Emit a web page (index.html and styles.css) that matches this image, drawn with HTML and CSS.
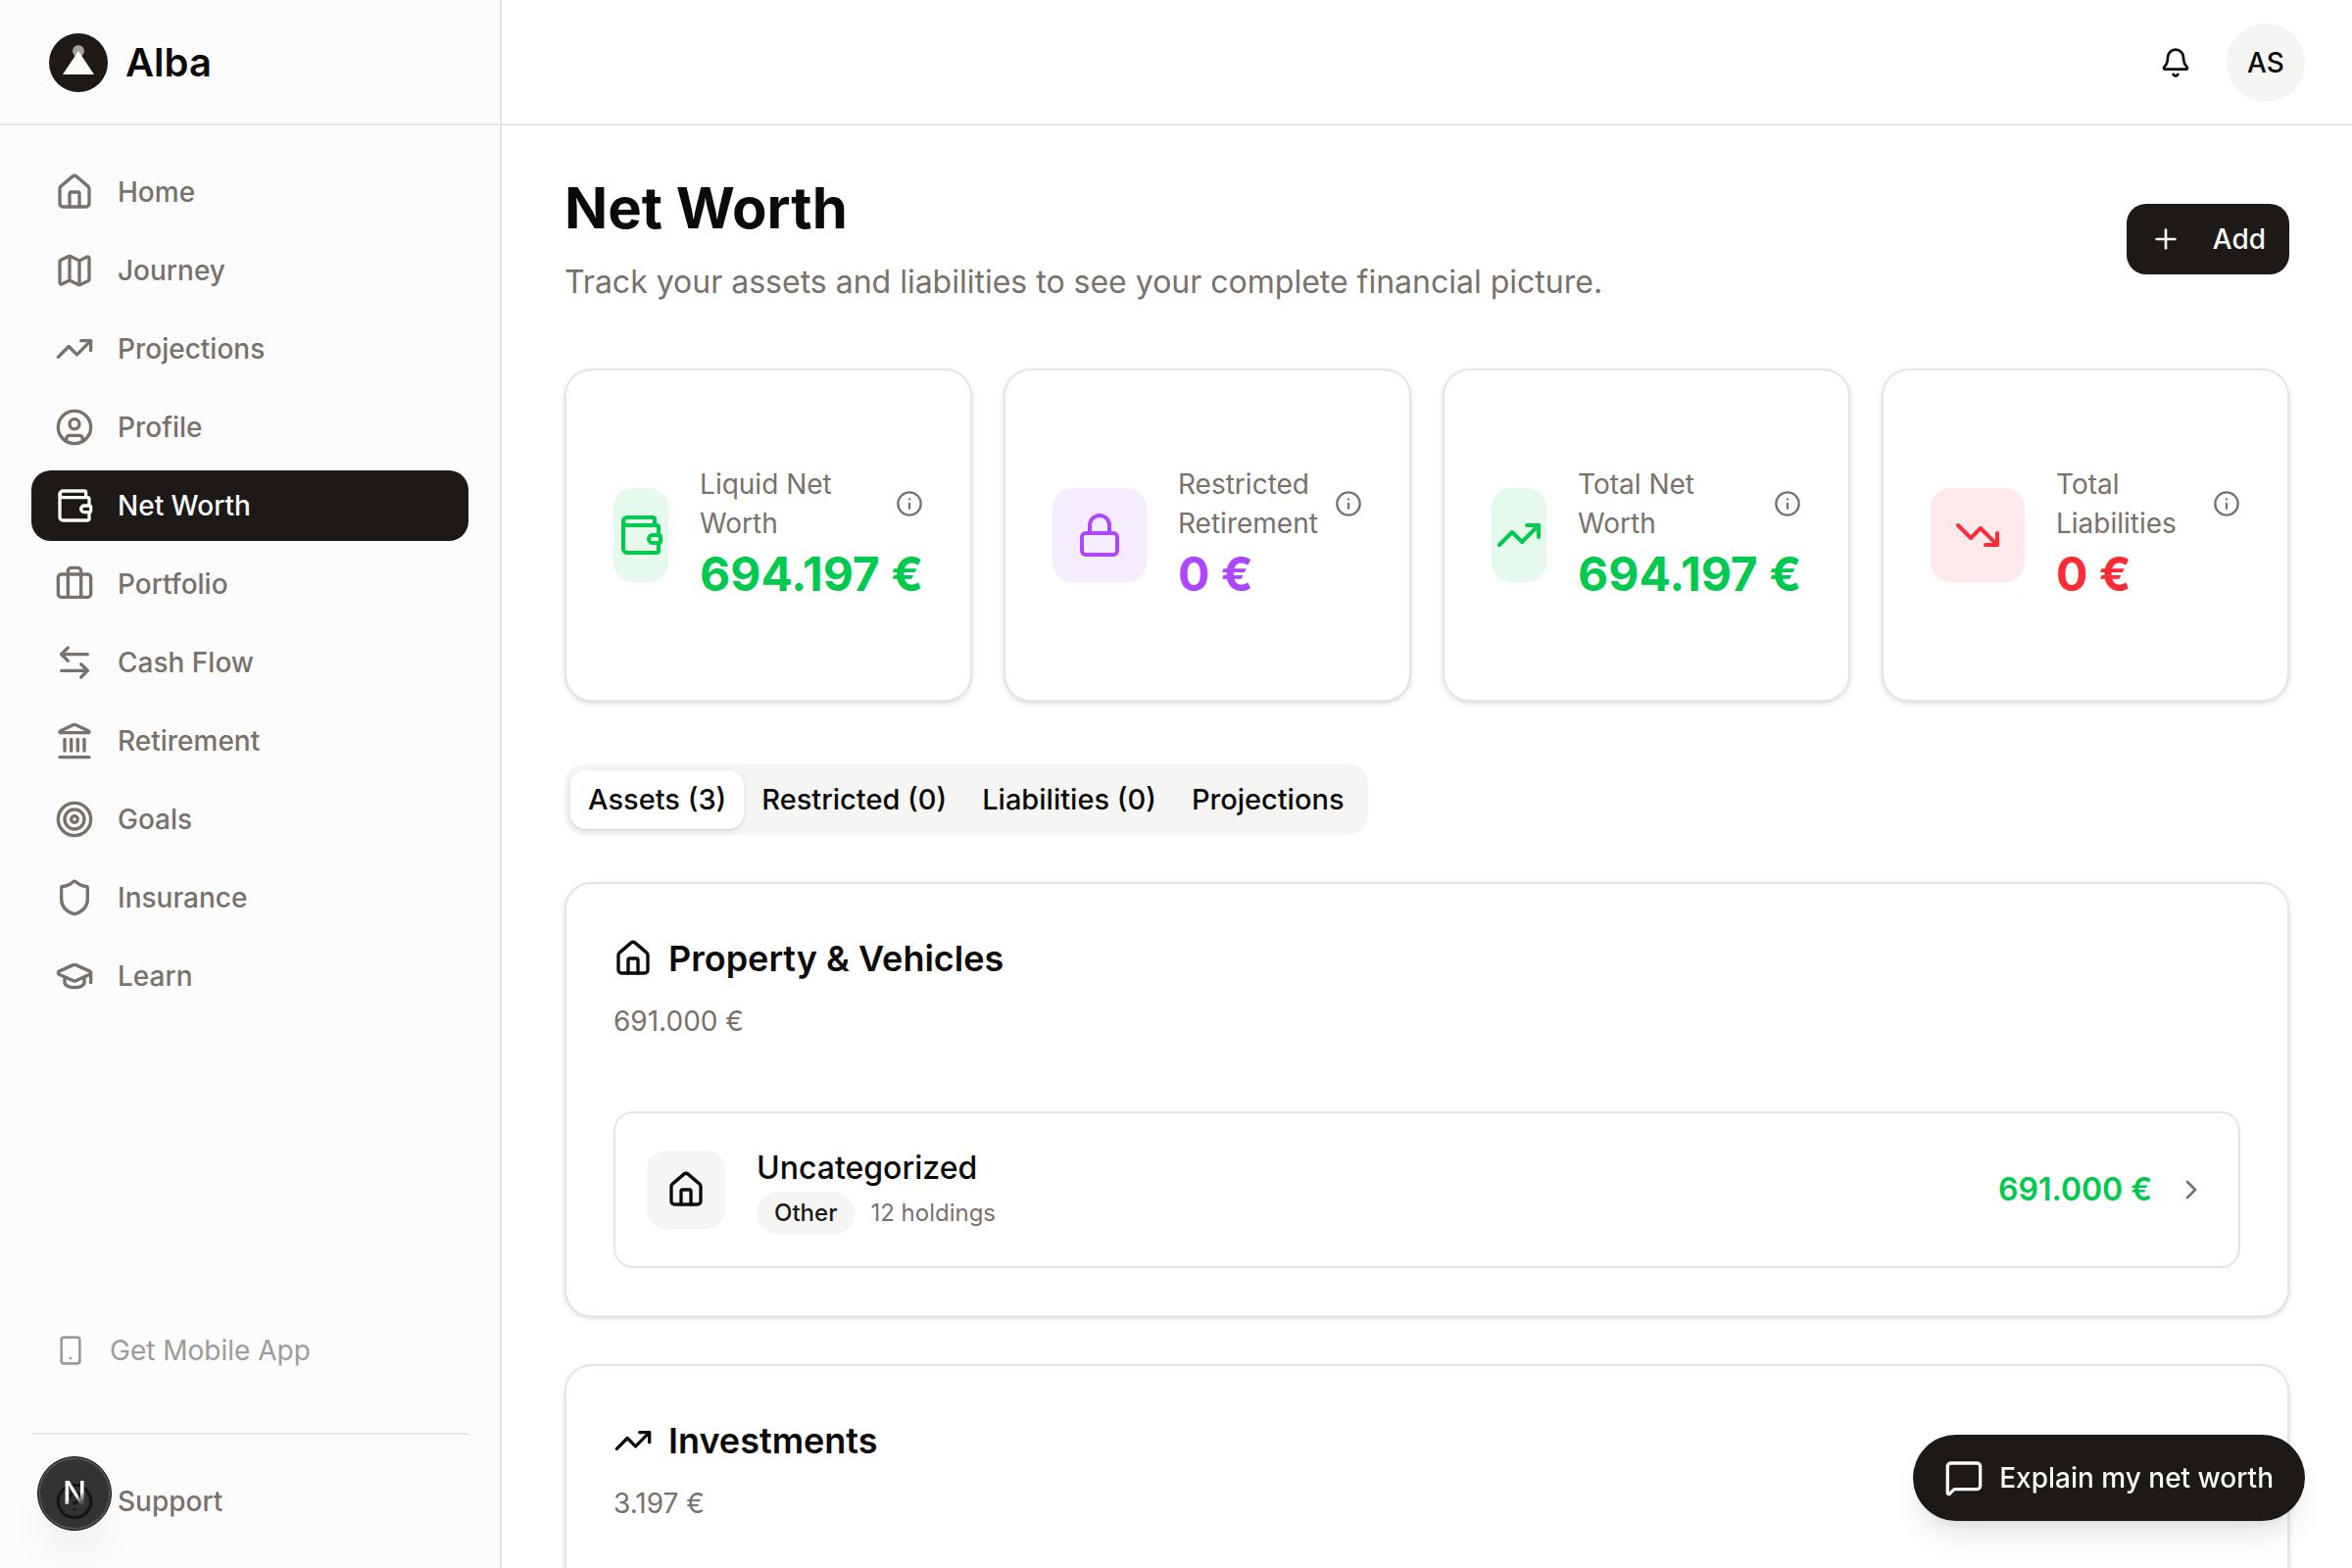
FILE: index.html
```html
<!DOCTYPE html>
<html lang="en">
<head>
<meta charset="UTF-8">
<meta name="viewport" content="width=device-width, initial-scale=1.0">
<title>Alba - Net Worth</title>
<link rel="stylesheet" href="styles.css">
</head>

<body>
  <!-- icons -->
  <svg class="sprite" aria-hidden="true">
    <symbol id="house" viewBox="0 0 24 24"><path d="M15 21v-8a1 1 0 0 0-1-1h-4a1 1 0 0 0-1 1v8"/><path d="M3 10a2 2 0 0 1 .709-1.528l7-5.999a2 2 0 0 1 2.582 0l7 5.999A2 2 0 0 1 21 10v9a2 2 0 0 1-2 2H5a2 2 0 0 1-2-2z"/></symbol>
    <symbol id="map" viewBox="0 0 24 24"><path d="M14.106 5.553a2 2 0 0 0 1.788 0l3.659-1.83A1 1 0 0 1 21 4.619v12.764a1 1 0 0 1-.553.894l-4.553 2.277a2 2 0 0 1-1.788 0l-4.212-2.106a2 2 0 0 0-1.788 0l-3.659 1.83A1 1 0 0 1 3 19.381V6.618a1 1 0 0 1 .553-.894l4.553-2.277a2 2 0 0 1 1.788 0z"/><path d="M15 5.764v15"/><path d="M9 3.236v15"/></symbol>
    <symbol id="trending-up" viewBox="0 0 24 24"><path d="M16 7h6v6"/><path d="m22 7-8.5 8.5-5-5L2 17"/></symbol>
    <symbol id="trending-down" viewBox="0 0 24 24"><path d="M16 17h6v-6"/><path d="m22 17-8.5-8.5-5 5L2 7"/></symbol>
    <symbol id="user" viewBox="0 0 24 24"><circle cx="12" cy="12" r="10"/><circle cx="12" cy="10" r="3"/><path d="M7 20.662V19a2 2 0 0 1 2-2h6a2 2 0 0 1 2 2v1.662"/></symbol>
    <symbol id="wallet" viewBox="0 0 24 24"><path d="M19 7V4a1 1 0 0 0-1-1H5a2 2 0 0 0 0 4h15a1 1 0 0 1 1 1v4h-3a2 2 0 0 0 0 4h3a1 1 0 0 0 1-1v-2a1 1 0 0 0-1-1"/><path d="M3 5v14a2 2 0 0 0 2 2h15a1 1 0 0 0 1-1v-4"/></symbol>
    <symbol id="briefcase" viewBox="0 0 24 24"><path d="M16 20V4a2 2 0 0 0-2-2h-4a2 2 0 0 0-2 2v16"/><rect width="20" height="14" x="2" y="6" rx="2"/></symbol>
    <symbol id="arrows" viewBox="0 0 24 24"><path d="M8 3 4 7l4 4"/><path d="M4 7h16"/><path d="m16 21 4-4-4-4"/><path d="M20 17H4"/></symbol>
    <symbol id="landmark" viewBox="0 0 24 24"><path d="M10 18v-7"/><path d="M11.12 2.198a2 2 0 0 1 1.76.006l7.866 3.847c.476.233.31.949-.22.949H3.474c-.53 0-.695-.716-.22-.949z"/><path d="M14 18v-7"/><path d="M18 18v-7"/><path d="M3 22h18"/><path d="M6 18v-7"/></symbol>
    <symbol id="target" viewBox="0 0 24 24"><circle cx="12" cy="12" r="10"/><circle cx="12" cy="12" r="6"/><circle cx="12" cy="12" r="2"/></symbol>
    <symbol id="shield" viewBox="0 0 24 24"><path d="M20 13c0 5-3.5 7.5-7.66 8.95a1 1 0 0 1-.67-.01C7.5 20.5 4 18 4 13V6a1 1 0 0 1 1-1c2 0 4.5-1.2 6.24-2.72a1.17 1.17 0 0 1 1.52 0C14.51 3.81 17 5 19 5a1 1 0 0 1 1 1z"/></symbol>
    <symbol id="cap" viewBox="0 0 24 24"><path d="M21.42 10.922a1 1 0 0 0-.019-1.838L12.83 5.18a2 2 0 0 0-1.66 0L2.6 9.08a1 1 0 0 0 0 1.832l8.57 3.908a2 2 0 0 0 1.66 0z"/><path d="M22 10v6"/><path d="M6 12.5V16a6 3 0 0 0 12 0v-3.5"/></symbol>
    <symbol id="phone" viewBox="0 0 24 24"><rect width="14" height="20" x="5" y="2" rx="2"/><path d="M12 18h.01"/></symbol>
    <symbol id="help" viewBox="0 0 24 24"><circle cx="12" cy="12" r="10"/><path d="M9.09 9a3 3 0 0 1 5.83 1c0 2-3 3-3 3"/><path d="M12 17h.01"/></symbol>
    <symbol id="bell" viewBox="0 0 24 24"><path d="M10.268 21a2 2 0 0 0 3.464 0"/><path d="M3.262 15.326A1 1 0 0 0 4 17h16a1 1 0 0 0 .74-1.673C19.41 13.956 18 12.499 18 8A6 6 0 0 0 6 8c0 4.499-1.411 5.956-2.738 7.326"/></symbol>
    <symbol id="plus" viewBox="0 0 24 24"><path d="M5 12h14"/><path d="M12 5v14"/></symbol>
    <symbol id="lock" viewBox="0 0 24 24"><rect width="18" height="11" x="3" y="11" rx="2"/><path d="M7 11V7a5 5 0 0 1 10 0v4"/></symbol>
    <symbol id="info" viewBox="0 0 24 24"><circle cx="12" cy="12" r="10"/><path d="M12 16v-4"/><path d="M12 8h.01"/></symbol>
    <symbol id="chevron" viewBox="0 0 24 24"><path d="m9 18 6-6-6-6"/></symbol>
    <symbol id="message" viewBox="0 0 24 24"><path d="M22 17a2 2 0 0 1-2 2H6.828a2 2 0 0 0-1.414.586l-2.202 2.202A.71.71 0 0 1 2 21.286V5a2 2 0 0 1 2-2h16a2 2 0 0 1 2 2z"/></symbol>
  </svg>

  <div class="app">
    <aside class="sidebar">
      <a class="brand" href="#">
        <svg class="brand-logo" viewBox="0 0 60 60" aria-hidden="true">
          <circle cx="30" cy="30" r="30" fill="#1c1917"/>
          <circle cx="30" cy="18" r="6" fill="#fafaf9" opacity="0.6"/>
          <path d="M30 18 46 42H14z" fill="#fafaf9"/>
        </svg>
        Alba
      </a>

      <nav class="nav">
        <a class="nav-item" href="#"><svg class="icon"><use href="#house"/></svg>Home</a>
        <a class="nav-item" href="#"><svg class="icon"><use href="#map"/></svg>Journey</a>
        <a class="nav-item" href="#"><svg class="icon"><use href="#trending-up"/></svg>Projections</a>
        <a class="nav-item" href="#"><svg class="icon"><use href="#user"/></svg>Profile</a>
        <a class="nav-item active" href="#"><svg class="icon"><use href="#wallet"/></svg>Net Worth</a>
        <a class="nav-item" href="#"><svg class="icon"><use href="#briefcase"/></svg>Portfolio</a>
        <a class="nav-item" href="#"><svg class="icon"><use href="#arrows"/></svg>Cash Flow</a>
        <a class="nav-item" href="#"><svg class="icon"><use href="#landmark"/></svg>Retirement</a>
        <a class="nav-item" href="#"><svg class="icon"><use href="#target"/></svg>Goals</a>
        <a class="nav-item" href="#"><svg class="icon"><use href="#shield"/></svg>Insurance</a>
        <a class="nav-item" href="#"><svg class="icon"><use href="#cap"/></svg>Learn</a>
      </nav>

      <a class="mobile-link" href="#"><svg class="icon icon-sm"><use href="#phone"/></svg>Get Mobile App</a>
      <div class="sidebar-footer">
        <a class="nav-item" href="#"><svg class="icon"><use href="#help"/></svg>Support</a>
      </div>
    </aside>

    <div class="page">
      <header class="topbar">
        <button class="bell" type="button" aria-label="Notifications"><svg class="icon icon-sm"><use href="#bell"/></svg></button>
        <button class="avatar" type="button">AS</button>
      </header>

      <main class="content">
        <div class="page-head">
          <div>
            <h1>Net Worth</h1>
            <p class="lead">Track your assets and liabilities to see your complete financial picture.</p>
          </div>
          <button class="add" type="button"><svg class="icon icon-sm"><use href="#plus"/></svg>Add</button>
        </div>

        <section class="stats">
          <div class="stat green">
            <div class="stat-icon"><svg class="icon icon-lg"><use href="#wallet"/></svg></div>
            <div class="stat-body">
              <div class="stat-label"><span>Liquid Net Worth</span><svg class="icon icon-xs"><use href="#info"/></svg></div>
              <p class="stat-value">694.197&nbsp;€</p>
            </div>
          </div>
          <div class="stat purple">
            <div class="stat-icon"><svg class="icon icon-lg"><use href="#lock"/></svg></div>
            <div class="stat-body">
              <div class="stat-label"><span>Restricted Retirement</span><svg class="icon icon-xs"><use href="#info"/></svg></div>
              <p class="stat-value">0&nbsp;€</p>
            </div>
          </div>
          <div class="stat green">
            <div class="stat-icon"><svg class="icon icon-lg"><use href="#trending-up"/></svg></div>
            <div class="stat-body">
              <div class="stat-label"><span>Total Net Worth</span><svg class="icon icon-xs"><use href="#info"/></svg></div>
              <p class="stat-value">694.197&nbsp;€</p>
            </div>
          </div>
          <div class="stat red">
            <div class="stat-icon"><svg class="icon icon-lg"><use href="#trending-down"/></svg></div>
            <div class="stat-body">
              <div class="stat-label"><span>Total Liabilities</span><svg class="icon icon-xs"><use href="#info"/></svg></div>
              <p class="stat-value">0&nbsp;€</p>
            </div>
          </div>
        </section>

        <div class="tabs" role="tablist">
          <button class="tab selected" type="button" role="tab" aria-selected="true">Assets (3)</button>
          <button class="tab" type="button" role="tab">Restricted (0)</button>
          <button class="tab" type="button" role="tab">Liabilities (0)</button>
          <button class="tab" type="button" role="tab">Projections</button>
        </div>

        <section class="card">
          <h2><svg class="icon"><use href="#house"/></svg>Property &amp; Vehicles</h2>
          <p class="card-total">691.000 €</p>
          <div class="holdings">
            <a class="holding" href="#">
              <span class="holding-icon"><svg class="icon"><use href="#house"/></svg></span>
              <span class="holding-info">
                <span class="holding-name">Uncategorized</span>
                <span class="holding-meta"><span class="badge">Other</span>12 holdings</span>
              </span>
              <span class="holding-value">691.000 €</span>
              <svg class="icon icon-sm chevron"><use href="#chevron"/></svg>
            </a>
          </div>
        </section>

        <section class="card">
          <h2><svg class="icon"><use href="#trending-up"/></svg>Investments</h2>
          <p class="card-total">3.197 €</p>
          <div class="holdings"></div>
        </section>
      </main>
    </div>
  </div>

  <button class="explain" type="button"><svg class="icon"><use href="#message"/></svg>Explain my net worth</button>
  <button class="dev-badge" type="button"><span>N</span></button>
</body>
</html>
```

FILE: styles.css
```css
* {
  box-sizing: border-box;
  margin: 0;
  padding: 0;
}

body {
  font-family: Inter, "Liberation Sans", sans-serif;
  font-size: 28px;
  line-height: 40px;
  color: #0c0a09;
  background-color: #fff;
}

a {
  color: inherit;
  text-decoration: none;
}

button {
  font: inherit;
  font-weight: 500;
  color: inherit;
  border: none;
  background: none;
  cursor: pointer;
}

.sprite {
  display: none;
}

.icon {
  width: 40px;
  height: 40px;
  flex-shrink: 0;
  fill: none;
  stroke: currentColor;
  stroke-width: 2;
  stroke-linecap: round;
  stroke-linejoin: round;
}

.icon-xs {
  width: 28px;
  height: 28px;
}

.icon-sm {
  width: 32px;
  height: 32px;
}

.icon-lg {
  width: 48px;
  height: 48px;
}

.app {
  display: flex;
  height: 100vh;
  overflow: hidden;
}

/* sidebar */
.sidebar {
  width: 512px;
  flex-shrink: 0;
  display: flex;
  flex-direction: column;
  background-color: #fcfcfc;
  border-right: 2px solid #e5e5e5;
}

.brand {
  display: flex;
  align-items: center;
  gap: 18px;
  height: 128px;
  padding: 2px 50px 0;
  border-bottom: 2px solid #e5e5e5;
  font-size: 40px;
  font-weight: 600;
}

.brand-logo {
  width: 60px;
  height: 60px;
}

.nav {
  flex: 1;
  display: flex;
  flex-direction: column;
  gap: 8px;
  padding: 32px;
}

.nav-item {
  display: flex;
  align-items: center;
  gap: 24px;
  height: 72px;
  padding: 0 24px;
  border-radius: 20px;
  color: #78716c;
  font-weight: 500;
}

.nav-item.active {
  background-color: #1c1917;
  color: #fafaf9;
}

.mobile-link {
  display: flex;
  align-items: center;
  gap: 24px;
  padding: 8px 56px;
  margin-bottom: 56px;
  color: #a09b98;
}

.sidebar-footer {
  margin: 0 32px;
  padding: 32px 0;
  border-top: 2px solid #e5e5e5;
}

/* top bar */
.page {
  flex: 1;
  min-width: 0;
  display: flex;
  flex-direction: column;
}

.topbar {
  display: flex;
  justify-content: flex-end;
  align-items: center;
  gap: 16px;
  height: 128px;
  flex-shrink: 0;
  padding: 2px 48px 0;
  border-bottom: 2px solid #e5e5e5;
}

.bell {
  display: flex;
  align-items: center;
  justify-content: center;
  width: 72px;
  height: 72px;
}

.avatar {
  width: 80px;
  height: 80px;
  border-radius: 50%;
  background-color: #f5f5f4;
}

/* content */
.content {
  flex: 1;
  overflow-y: auto;
  scrollbar-width: none;
  padding: 48px 64px;
}

.page-head {
  display: flex;
  justify-content: space-between;
  align-items: center;
  margin-bottom: 64px;
}

h1 {
  font-size: 58px;
  line-height: 72px;
  font-weight: 700;
  margin-bottom: 16px;
}

.lead {
  font-size: 32px;
  line-height: 48px;
  color: #78716c;
}

.add {
  display: flex;
  align-items: center;
  gap: 32px;
  height: 72px;
  padding: 0 24px;
  border-radius: 20px;
  background-color: #1c1917;
  color: #fafaf9;
}

.stats {
  display: grid;
  grid-template-columns: repeat(4, minmax(0, 1fr));
  gap: 32px;
  margin-bottom: 64px;
}

.stat,
.card {
  background-color: #fff;
  border: 2px solid #e5e5e5;
  border-radius: 28px;
  box-shadow: 0 2px 6px rgba(0, 0, 0, 0.1), 0 2px 4px -2px rgba(0, 0, 0, 0.1);
}

.stat {
  display: flex;
  align-items: center;
  gap: 32px;
  padding: 96px 48px;
}

.stat-icon {
  display: flex;
  align-items: center;
  justify-content: center;
  width: 96px;
  height: 96px;
  border-radius: 20px;
}

.stat-body {
  flex: 1;
}

.stat-label {
  display: flex;
  align-items: center;
  justify-content: space-between;
  gap: 8px;
  color: #78716c;
}

.stat-value {
  font-size: 48px;
  line-height: 64px;
  font-weight: 700;
}

.green .stat-icon {
  background-color: #e5f9ed;
}

.green .stat-icon,
.green .stat-value {
  color: #00c950;
}

.purple .stat-icon {
  background-color: #f6ecff;
}

.purple .stat-icon,
.purple .stat-value {
  color: #ad46ff;
}

.red .stat-icon {
  background-color: #ffe9ea;
}

.red .stat-icon,
.red .stat-value {
  color: #fb2c36;
}

/* tabs */
.tabs {
  display: flex;
  width: fit-content;
  padding: 6px;
  margin-bottom: 48px;
  border-radius: 20px;
  background-color: #f5f5f4;
}

.tab {
  height: 60px;
  padding: 0 18px;
  border-radius: 16px;
  font-size: 29px;
}

.tab.selected {
  background-color: #fff;
  box-shadow: 0 2px 6px rgba(0, 0, 0, 0.1), 0 2px 4px -2px rgba(0, 0, 0, 0.1);
}

/* asset cards */
.card {
  padding: 48px;
  margin-bottom: 48px;
}

h2 {
  display: flex;
  align-items: center;
  gap: 16px;
  margin-bottom: 16px;
  font-size: 36px;
  line-height: 56px;
  font-weight: 600;
}

.card-total {
  color: #78716c;
}

.holdings {
  min-height: 160px;
  margin-top: 72px;
}

.holding {
  display: flex;
  align-items: center;
  padding: 32px;
  border: 2px solid #e5e5e5;
  border-radius: 20px;
}

.holding-icon {
  display: flex;
  align-items: center;
  justify-content: center;
  width: 80px;
  height: 80px;
  margin-right: 32px;
  border-radius: 20px;
  background-color: #f5f5f4;
}

.holding-info {
  flex: 1;
}

.holding-name {
  display: block;
  font-size: 32px;
  line-height: 48px;
  font-weight: 500;
}

.holding-meta {
  display: flex;
  align-items: center;
  gap: 16px;
  font-size: 24px;
  color: #78716c;
}

.badge {
  padding: 2px 18px;
  border-radius: 22px;
  background-color: #f5f5f4;
  color: #1c1917;
  font-weight: 500;
}

.holding-value {
  margin-right: 24px;
  font-size: 32px;
  font-weight: 600;
  color: #00c950;
}

.chevron {
  color: #78716c;
}

/* floating buttons */
.explain {
  position: fixed;
  right: 48px;
  bottom: 48px;
  display: flex;
  align-items: center;
  gap: 16px;
  height: 88px;
  padding: 0 32px;
  border-radius: 44px;
  background-color: #1c1917;
  color: #fafaf9;
  box-shadow: 0 20px 30px -6px rgba(0, 0, 0, 0.1), 0 8px 12px -8px rgba(0, 0, 0, 0.1);
}

.dev-badge {
  position: fixed;
  left: 38px;
  bottom: 38px;
  width: 76px;
  height: 76px;
  border: 1px solid #171717;
  border-radius: 50%;
  background-color: rgba(0, 0, 0, 0.8);
  box-shadow: inset 0 0 0 2px rgba(255, 255, 255, 0.14), 0 32px 48px -8px rgba(0, 0, 0, 0.06);
}

.dev-badge span {
  font-size: 32px;
  background-image: linear-gradient(150deg, #fff 55%, #555 75%);
  background-clip: text;
  -webkit-background-clip: text;
  color: transparent;
}
```
